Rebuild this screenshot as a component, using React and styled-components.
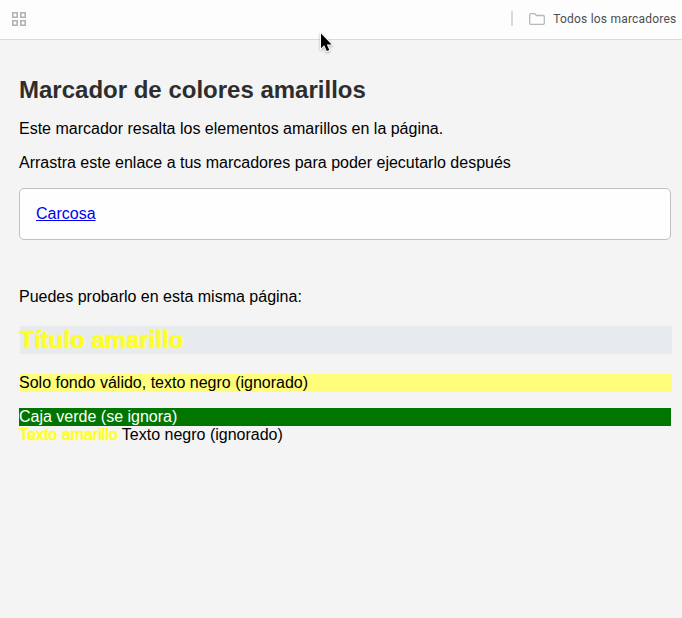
import React from "react";
import styled, { createGlobalStyle } from "styled-components";

const GlobalStyle = createGlobalStyle`
  * { box-sizing: border-box; }
  body {
    margin: 0;
    background: #f4f4f4;
    color: #000;
    font: 16px/18px "Liberation Sans", Arial, sans-serif;
  }
`;

const Page = styled.div`
  position: relative;
  min-height: 618px;
  overflow: hidden;
`;

const BookmarksBar = styled.header`
  display: flex;
  align-items: center;
  height: 40px;
  padding: 0 5.5px 2px 12px;
  background: #fdfdfd;
  border-bottom: 1px solid #dadada;
`;

const Divider = styled.span`
  width: 2px;
  height: 15px;
  margin: 0 16.5px 0 auto;
  background: #dadada;
`;

const AllBookmarks = styled.span`
  display: flex;
  align-items: center;
  gap: 8px;
  font: 12px/16px Roboto, sans-serif;
  letter-spacing: 0.21px;
  color: #4d4d50;
  white-space: nowrap;
`;

const Content = styled.main`
  padding: 35px 11px 0 19px;
`;

const Title = styled.h1`
  margin: 0 0 15px;
  font-size: 24px;
  line-height: 30px;
  color: #2d2d2d;
`;

const Text = styled.p`
  margin: 0 0 16px;
`;

const LinkBox = styled.div`
  height: 52px;
  margin-bottom: 48px;
  padding: 16px;
  background: #fefefe;
  border: 1px solid #c0c0c0;
  border-radius: 5px;
`;

const Link = styled.a`
  color: #0000ee;
`;

const YellowTitle = styled.h2`
  margin: 20px -1px 20px 1px;
  height: 28px;
  font-size: 24px;
  line-height: 28px;
  text-indent: -0.5px;
  color: #ffff22;
  -webkit-text-stroke: 0.6px #ffff22;
  background: #e7ebee;
`;

const YellowStrip = styled.div`
  height: 18px;
  margin: 0 -1px 16px 1px;
  text-indent: -1px;
  background: #fffd7a;
`;

const GreenStrip = styled.div`
  height: 18px;
  color: #fff;
  background: #007600;
`;

const YellowText = styled.span`
  color: #ffff1c;
  -webkit-text-stroke: 0.7px #ffff1c;
`;

const Cursor = styled.svg`
  position: absolute;
  left: 318px;
  top: 31px;
  filter: drop-shadow(0 1px 1px rgba(0, 0, 0, 0.3));
`;

export default function App() {
  return (
    <Page>
      <GlobalStyle />
      <BookmarksBar>
        <svg width="14" height="14" viewBox="0 0 14 14" fill="none" stroke="#b2b2b2" strokeWidth="1.6">
          <path d="M.8.8h4.4v4.4H.8zM8.8.8h4.4v4.4H8.8zM.8 8.8h4.4v4.4H.8zM8.8 8.8h4.4v4.4H8.8z" />
        </svg>
        <Divider />
        <AllBookmarks>
          <svg width="16" height="12" viewBox="0 0 16 12" fill="none" stroke="#b8b8b8" strokeWidth="1.3">
            <path d="M1.7.7h4l1.8 1.8h6.8c.6 0 1 .4 1 1v6.8c0 .6-.4 1-1 1H1.7c-.6 0-1-.4-1-1V1.7c0-.6.4-1 1-1z" />
          </svg>
          Todos los marcadores
        </AllBookmarks>
      </BookmarksBar>
      <Content>
        <Title>Marcador de colores amarillos</Title>
        <Text>Este marcador resalta los elementos amarillos en la página.</Text>
        <Text>Arrastra este enlace a tus marcadores para poder ejecutarlo después</Text>
        <LinkBox>
          <Link href="#">Carcosa</Link>
        </LinkBox>
        <Text>Puedes probarlo en esta misma página:</Text>
        <YellowTitle>Título amarillo</YellowTitle>
        <YellowStrip>Solo fondo válido, texto negro (ignorado)</YellowStrip>
        <GreenStrip>Caja verde (se ignora)</GreenStrip>
        <YellowText>Texto amarillo</YellowText> <span>Texto negro (ignorado)</span>
      </Content>
      <Cursor width="17" height="23" viewBox="0 0 17 23">
        <path
          d="M3 2.5v14.8l3.2-3 2.6 5.8 2.5-1.1-2.5-5.4h4.8z"
          fill="#000"
          stroke="#fff"
          strokeWidth="1.8"
          paintOrder="stroke"
        />
      </Cursor>
    </Page>
  );
}
